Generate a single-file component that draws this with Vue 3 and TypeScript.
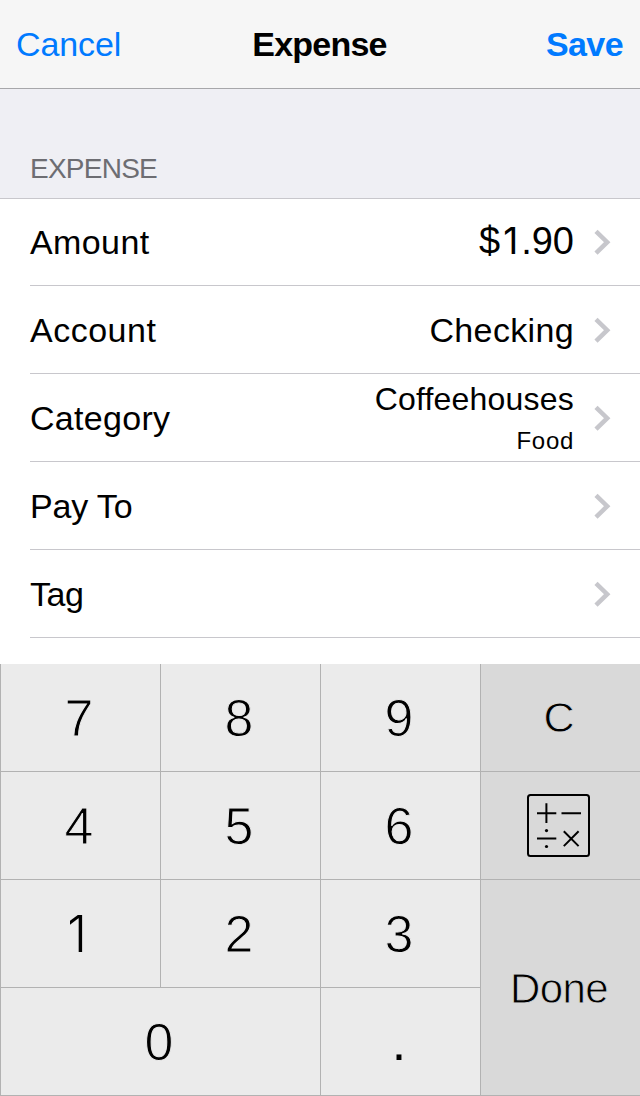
<script setup lang="ts">
interface Row {
  label: string
  tracking: number
  value?: string
  detail?: string
  kind?: string
}

interface Key {
  label: string
  name: string
}

const rows: Row[] = [
  { label: 'Amount', tracking: 0.4, value: '$1.90', kind: 'amount' },
  { label: 'Account', tracking: 0.5, value: 'Checking' },
  { label: 'Category', tracking: 0.3, value: 'Coffeehouses', detail: 'Food', kind: 'stacked' },
  { label: 'Pay To', tracking: -0.15 },
  { label: 'Tag', tracking: -0.5 },
]

const keys: Key[] = [
  { label: '7', name: 'digit' },
  { label: '8', name: 'digit' },
  { label: '9', name: 'digit' },
  { label: 'C', name: 'action' },
  { label: '4', name: 'digit' },
  { label: '5', name: 'digit' },
  { label: '6', name: 'digit' },
  { label: '', name: 'action calc' },
  { label: '1', name: 'digit one-key' },
  { label: '2', name: 'digit' },
  { label: '3', name: 'digit' },
  { label: 'Done', name: 'action done' },
  { label: '0', name: 'digit zero' },
  { label: '.', name: 'digit point' },
]
</script>

<template>
  <div class="screen">
    <header class="bar">
      <span class="cancel">Cancel</span>
      <span class="title">Expense</span>
      <span class="save">Save</span>
    </header>

    <div class="section">EXPENSE</div>

    <main class="list">
      <div v-for="row in rows" :key="row.label" class="row">
        <span class="label" :style="{ letterSpacing: row.tracking + 'px' }">{{ row.label }}</span>
        <span class="value" :class="row.kind">
          <span v-if="row.value" class="main"><span v-for="(ch, i) in row.kind === 'amount' ? row.value.split('') : [row.value]" :key="i" :class="{ one: ch === '1' }">{{ ch }}</span></span>
          <span v-if="row.detail" class="detail">{{ row.detail }}</span>
        </span>
        <svg class="chevron" width="17" height="26" viewBox="0 0 17 26">
          <path d="M2 2.3 L13.2 13.2 L2 24.1" fill="none" stroke="#c7c7cc" stroke-width="4.5" />
        </svg>
      </div>
    </main>

    <div class="pad">
      <div v-for="key in keys" :key="key.name + key.label" class="key" :class="key.name">
        <svg v-if="!key.label" width="63" height="63" viewBox="0 0 63 63" fill="none" stroke="#000" stroke-width="2">
          <rect x="1" y="1" width="61" height="61" rx="2.5" />
          <path d="M10 19.3H29.3M19.4 9.3V29M34.5 19.3H54M10 44.4H29.3" />
          <path d="M36.8 37.3L51.6 52.1M51.6 37.3L36.8 52.1" />
          <g fill="#000" stroke="none">
            <circle cx="19.5" cy="36.6" r="1.6" />
            <circle cx="19.5" cy="52.5" r="1.6" />
          </g>
        </svg>
        <span v-else>{{ key.label }}</span>
      </div>
    </div>
  </div>
</template>

<style>
body {
  margin: 0;
}
</style>

<style scoped>
.screen {
  width: 640px;
  height: 1096px;
  display: flex;
  flex-direction: column;
  overflow: hidden;
  background: #fff;
  color: #000;
  font-family: "Liberation Sans", Arial, sans-serif;
  font-size: 34px;
  white-space: nowrap;
}

.bar {
  box-sizing: border-box;
  flex: none;
  height: 89px;
  padding: 0 17px 0 16px;
  border-bottom: 1px solid #a7a7aa;
  background: #f6f6f6;
  display: grid;
  grid-template-columns: 1fr auto 1fr;
  align-items: center;
  line-height: 88px;
}

.cancel {
  color: #007aff;
  letter-spacing: -0.1px;
}

.title {
  font-weight: bold;
  letter-spacing: -0.8px;
}

.save {
  color: #007aff;
  font-weight: bold;
  text-align: right;
  letter-spacing: -0.6px;
}

.section {
  box-sizing: border-box;
  flex: none;
  height: 110px;
  padding: 60px 0 0 30px;
  border-bottom: 1px solid #c8c7cc;
  background: #efeff4;
  color: #6d6d72;
  font-size: 28px;
  line-height: 40px;
  letter-spacing: -0.75px;
}

.list {
  flex: none;
  height: 465px;
}

.row {
  box-sizing: border-box;
  height: 88px;
  margin-left: 30px;
  padding-right: 29px;
  border-bottom: 1px solid #c8c7cc;
  display: flex;
  align-items: center;
}

.row:first-child {
  height: 87px;
}

.label {
  flex: 1;
}

.row:not(:first-child) .label,
.row:not(:first-child) .value {
  padding-top: 2px;
}

.value {
  display: flex;
  flex-direction: column;
  align-items: flex-end;
  margin-right: 20px;
  letter-spacing: 0.35px;
}

.amount {
  font-size: 38px;
  padding-bottom: 1px;
  letter-spacing: 0;
}

.amount .one {
  font-family: Inter, sans-serif;
  font-size: 37px;
  display: inline-block;
  width: 21px;
  text-align: center;
  line-height: 1;
}

.stacked {
  font-size: 32px;
  letter-spacing: 0.2px;
}

.stacked .main {
  line-height: 44px;
  margin-top: -1px;
}

.detail {
  font-size: 24px;
  line-height: 39px;
  letter-spacing: 0.7px;
}

.chevron {
  flex: none;
}

.pad {
  display: grid;
  grid-template-columns: repeat(4, 160px);
  grid-template-rows: repeat(4, 108px);
}

.key {
  box-sizing: border-box;
  border-left: 1px solid #b2b2b2;
  border-bottom: 1px solid #b2b2b2;
  display: flex;
  align-items: center;
  justify-content: center;
  padding-right: 3px;
}

.digit {
  background: #ebebeb;
  font-size: 52px;
  -webkit-text-stroke: 1px #ebebeb;
}

.one-key {
  padding-right: 7px;
  font-family: Inter, sans-serif;
  font-size: 50px;
  font-weight: 300;
  -webkit-text-stroke: 0;
}

.point {
  -webkit-text-stroke: 0;
}

.action {
  background: #d9d9d9;
  font-size: 43px;
  -webkit-text-stroke: 0.8px #d9d9d9;
}

.calc {
  padding-right: 4px;
}

.done {
  grid-row: span 2;
  padding-top: 2px;
  font-size: 42px;
  letter-spacing: -0.6px;
}

.zero {
  grid-column: span 2;
}
</style>
